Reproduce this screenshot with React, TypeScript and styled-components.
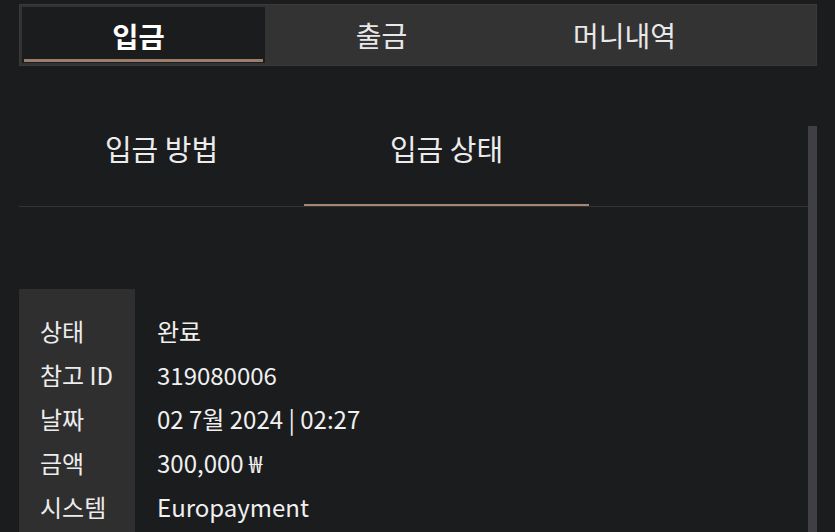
import React from "react";
import styled, { createGlobalStyle } from "styled-components";

const Global = createGlobalStyle`
  html, body { margin: 0; padding: 0; background: #1b1c1e; overflow: hidden; }
  body { font-family: "Noto Sans CJK KR", "Noto Sans", sans-serif; color: #ececec; }
  * { box-sizing: border-box; }
`;

const Page = styled.div`
  width: 835px;
  height: 532px;
  padding: 4px 18px 0 19px;
  display: flex;
  flex-direction: column;
`;

const TopBar = styled.div`
  height: 62px;
  background: #333334;
  border: 1px solid #3a3a3b;
  padding: 2px;
  display: flex;
`;

const TopTab = styled.div<{ $active?: boolean }>`
  position: relative;
  width: 243px;
  display: flex;
  align-items: center;
  justify-content: center;
  padding-right: 10px;
  font-size: ${(p) => (p.$active ? "28.5px" : "28px")};
  font-weight: ${(p) => (p.$active ? 700 : 400)};
  color: ${(p) => (p.$active ? "#ffffff" : "#e8e8e8")};
  background: ${(p) => (p.$active ? "#1b1c1e" : "transparent")};
  &::after {
    content: "";
    display: ${(p) => (p.$active ? "block" : "none")};
    position: absolute;
    left: 2px;
    right: 2px;
    bottom: 1px;
    height: 3px;
    background: #9c7e6c;
  }
`;

const Body = styled.div`
  flex: 1;
  display: flex;
  min-height: 0;
`;

const Main = styled.div`
  flex: 1;
  display: flex;
  flex-direction: column;
`;

const ScrollThumb = styled.div`
  width: 9px;
  margin-top: 60px;
  background: #403f45;
`;

const SubTabs = styled.div`
  margin-top: 28px;
  display: flex;
  border-bottom: 1px solid #343436;
`;

const SubTab = styled.div<{ $active?: boolean }>`
  width: 285px;
  height: 112px;
  display: flex;
  align-items: center;
  justify-content: center;
  padding-bottom: 2px;
  font-size: 29px;
  color: #ececec;
  border-bottom: 2px solid ${(p) => (p.$active ? "#a58674" : "transparent")};
`;

const Info = styled.div`
  margin-top: 82px;
  display: flex;
  font-size: 24px;
  line-height: 44px;
`;

const LabelCol = styled.div`
  width: 116px;
  background: #2f2f30;
  padding: 20px 0 4px 21px;
  display: flex;
  flex-direction: column;
  color: #ececec;
`;

const ValueCol = styled.div`
  padding: 20px 0 0 22px;
  display: flex;
  flex-direction: column;
  color: #f0f0f0;
`;

const Cell = styled.div`
  height: 44px;
  white-space: nowrap;
`;

const rows: [string, string][] = [
  ["상태", "완료"],
  ["참고 ID", "319080006"],
  ["날짜", "02 7월 2024 | 02:27"],
  ["금액", "300,000 ₩"],
  ["시스템", "Europayment"],
];

export default function App() {
  return (
    <>
      <Global />
      <Page>
        <TopBar>
          <TopTab $active>입금</TopTab>
          <TopTab>출금</TopTab>
          <TopTab>머니내역</TopTab>
        </TopBar>
        <Body>
          <Main>
            <SubTabs>
              <SubTab>입금 방법</SubTab>
              <SubTab $active>입금 상태</SubTab>
            </SubTabs>
            <Info>
              <LabelCol>
                {rows.map(([l]) => (
                  <Cell key={l}>{l}</Cell>
                ))}
              </LabelCol>
              <ValueCol>
                {rows.map(([l, v]) => (
                  <Cell key={l}>{v}</Cell>
                ))}
              </ValueCol>
            </Info>
          </Main>
          <ScrollThumb />
        </Body>
      </Page>
    </>
  );
}
